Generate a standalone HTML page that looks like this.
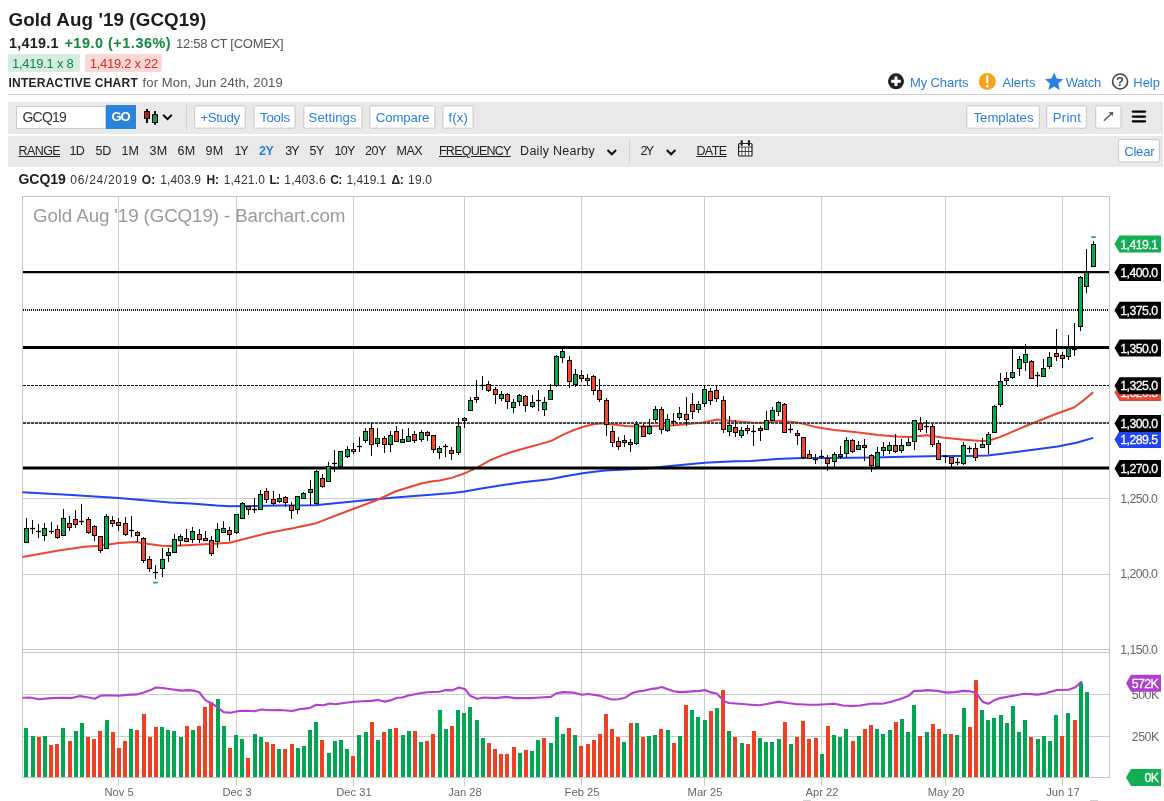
<!DOCTYPE html>
<html lang="en">
<head>
<meta charset="utf-8">
<title>Gold Aug '19 (GCQ19) Interactive Chart</title>
<style>
html,body{margin:0;padding:0;background:#fff;}
body{width:1164px;height:801px;position:relative;overflow:hidden;will-change:transform;font-family:"Liberation Sans",sans-serif;}
.t{position:absolute;white-space:nowrap;line-height:1;}
.box{position:absolute;box-sizing:border-box;}
svg text{font-family:"Liberation Sans",sans-serif;}
.ico{position:absolute;left:0;top:0;}
</style>
</head>
<body>
<div class="box" style="left:8px;top:94px;width:1156px;height:1px;background:#cdcdcd"></div>
<div class="box" style="left:8px;top:54px;width:72px;height:17.5px;background:#d6ebe1;border-radius:2px"></div>
<div class="box" style="left:85px;top:54px;width:77px;height:17.5px;background:#fbd8d8;border-radius:2px"></div>
<div class="box" style="left:8px;top:102px;width:1155px;height:31.7px;background:#e9e9e9"></div>
<div class="box" style="left:8px;top:136.3px;width:1155px;height:30.5px;background:#e9e9e9"></div>
<div class="box" style="left:16px;top:105.5px;width:90px;height:23.3px;background:#fff;border:1px solid #ccc"></div>
<div class="box" style="left:105.9px;top:105.1px;width:30.1px;height:23.8px;background:#2a84de"></div>
<div class="box" style="left:186px;top:105px;width:1px;height:24.5px;background:#d2d2d2"></div>
<div class="box" style="left:629px;top:138.5px;width:1px;height:25px;background:#d4d4d4"></div>
<svg class="ico" width="1164" height="190" viewBox="0 0 1164 190">
<rect x="194.7" y="105.9" width="50.5" height="22.3" rx="1.5" fill="#fff" stroke="#c6c6c6" stroke-width="1"/>
<rect x="254.0" y="105.9" width="41.1" height="22.3" rx="1.5" fill="#fff" stroke="#c6c6c6" stroke-width="1"/>
<rect x="303.8" y="105.9" width="58.2" height="22.3" rx="1.5" fill="#fff" stroke="#c6c6c6" stroke-width="1"/>
<rect x="369.9" y="105.9" width="65.0" height="22.3" rx="1.5" fill="#fff" stroke="#c6c6c6" stroke-width="1"/>
<rect x="442.9" y="105.9" width="30.2" height="22.3" rx="1.5" fill="#fff" stroke="#c6c6c6" stroke-width="1"/>
<rect x="966.8" y="105.9" width="72.5" height="22.3" rx="1.5" fill="#fff" stroke="#c6c6c6" stroke-width="1"/>
<rect x="1046.7" y="105.9" width="39.6" height="22.3" rx="1.5" fill="#fff" stroke="#c6c6c6" stroke-width="1"/>
<rect x="1095.7" y="105.9" width="25.3" height="22.3" rx="1.5" fill="#fff" stroke="#c6c6c6" stroke-width="1"/>
<rect x="1118.6" y="139.7" width="40.8" height="22.2" rx="1.5" fill="#fff" stroke="#c6c6c6" stroke-width="1"/>
</svg>
<span id="t_title" class="t" style="left:8.5px;top:11.00px;font-size:18.8px;font-weight:bold;color:#1c1c1c;letter-spacing:0.098px;">Gold Aug '19 (GCQ19)</span>
<span id="t_last" class="t" style="left:9px;top:36.00px;font-size:14.4px;font-weight:bold;color:#222;letter-spacing:0.242px;">1,419.1</span>
<span id="t_chg" class="t" style="left:64.4px;top:36.00px;font-size:14.4px;font-weight:bold;color:#0d8a3d;letter-spacing:0.540px;">+19.0 (+1.36%)</span>
<span id="t_time" class="t" style="left:176px;top:37.00px;font-size:13px;font-weight:normal;color:#555;letter-spacing:-0.275px;">12:58 CT [COMEX]</span>
<span id="t_bid" class="t" style="left:11.9px;top:57.00px;font-size:13px;font-weight:normal;color:#0d8a3d;letter-spacing:-0.241px;">1,419.1 x 8</span>
<span id="t_ask" class="t" style="left:89.8px;top:57.00px;font-size:13px;font-weight:normal;color:#d9281c;letter-spacing:-0.292px;">1,419.2 x 22</span>
<span id="t_ic" class="t" style="left:8.4px;top:77.00px;font-size:12px;font-weight:bold;color:#222;letter-spacing:0.252px;">INTERACTIVE CHART</span>
<span id="t_for" class="t" style="left:142.6px;top:76.00px;font-size:13px;font-weight:normal;color:#555;letter-spacing:0.124px;">for Mon, Jun 24th, 2019</span>
<span id="t_myc" class="t" style="left:909.9px;top:76.00px;font-size:13px;font-weight:normal;color:#2a7de1;letter-spacing:-0.087px;">My Charts</span>
<span id="t_alerts" class="t" style="left:1002.4px;top:76.00px;font-size:13px;font-weight:normal;color:#2a7de1;letter-spacing:-0.042px;">Alerts</span>
<span id="t_watch" class="t" style="left:1065.8px;top:76.00px;font-size:13px;font-weight:normal;color:#2a7de1;letter-spacing:-0.237px;">Watch</span>
<span id="t_help" class="t" style="left:1133.3px;top:76.00px;font-size:13px;font-weight:normal;color:#2a7de1;letter-spacing:-0.043px;">Help</span>
<span id="t_sym" class="t" style="left:22.5px;top:110.00px;font-size:14px;font-weight:normal;color:#333;letter-spacing:-0.772px;">GCQ19</span>
<span id="t_go" class="t" style="left:111.5px;top:110.00px;font-size:13px;font-weight:bold;color:#fff;letter-spacing:-1.156px;">GO</span>
<span id="t_study" class="t" style="left:200.4px;top:111.00px;font-size:13.2px;font-weight:normal;color:#2a7de1;letter-spacing:-0.333px;">+Study</span>
<span id="t_tools" class="t" style="left:260px;top:111.00px;font-size:13.2px;font-weight:normal;color:#2a7de1;letter-spacing:-0.175px;">Tools</span>
<span id="t_settings" class="t" style="left:308.6px;top:111.00px;font-size:13.2px;font-weight:normal;color:#2a7de1;letter-spacing:0.033px;">Settings</span>
<span id="t_compare" class="t" style="left:375.8px;top:111.00px;font-size:13.2px;font-weight:normal;color:#2a7de1;letter-spacing:-0.115px;">Compare</span>
<span id="t_fx" class="t" style="left:448.5px;top:111.00px;font-size:13.2px;font-weight:normal;color:#2a7de1;letter-spacing:0.128px;">f(x)</span>
<span id="t_templates" class="t" style="left:973.5px;top:111.00px;font-size:13.2px;font-weight:normal;color:#2a7de1;letter-spacing:-0.013px;">Templates</span>
<span id="t_print" class="t" style="left:1052.7px;top:111.00px;font-size:13.2px;font-weight:normal;color:#2a7de1;letter-spacing:0.263px;">Print</span>
<span id="t_clear" class="t" style="left:1124.2px;top:145.00px;font-size:13.2px;font-weight:normal;color:#2a7de1;letter-spacing:-0.272px;">Clear</span>
<span id="t_range" class="t" style="left:18.6px;top:145.00px;font-size:12.5px;font-weight:normal;color:#222;letter-spacing:-0.615px;text-decoration:underline">RANGE</span>
<span id="t_1d" class="t" style="left:69.6px;top:145.00px;font-size:12.5px;font-weight:normal;color:#222;letter-spacing:-0.729px;">1D</span>
<span id="t_5d" class="t" style="left:95.6px;top:145.00px;font-size:12.5px;font-weight:normal;color:#222;letter-spacing:-0.395px;">5D</span>
<span id="t_1m" class="t" style="left:121.5px;top:145.00px;font-size:12.5px;font-weight:normal;color:#222;letter-spacing:0.089px;">1M</span>
<span id="t_3m" class="t" style="left:149.5px;top:145.00px;font-size:12.5px;font-weight:normal;color:#222;letter-spacing:0.421px;">3M</span>
<span id="t_6m" class="t" style="left:177.5px;top:145.00px;font-size:12.5px;font-weight:normal;color:#222;letter-spacing:0.421px;">6M</span>
<span id="t_9m" class="t" style="left:205.5px;top:145.00px;font-size:12.5px;font-weight:normal;color:#222;letter-spacing:0.421px;">9M</span>
<span id="t_1y" class="t" style="left:234.5px;top:145.00px;font-size:12.5px;font-weight:normal;color:#222;letter-spacing:-1.196px;">1Y</span>
<span id="t_2y" class="t" style="left:259px;top:145.00px;font-size:12.5px;font-weight:bold;color:#2a7de1;letter-spacing:-0.532px;">2Y</span>
<span id="t_3y" class="t" style="left:285.2px;top:145.00px;font-size:12.5px;font-weight:normal;color:#222;letter-spacing:-0.995px;">3Y</span>
<span id="t_5y" class="t" style="left:309.6px;top:145.00px;font-size:12.5px;font-weight:normal;color:#222;letter-spacing:-0.595px;">5Y</span>
<span id="t_10y" class="t" style="left:334.6px;top:145.00px;font-size:12.5px;font-weight:normal;color:#222;letter-spacing:-0.739px;">10Y</span>
<span id="t_20y" class="t" style="left:365px;top:145.00px;font-size:12.5px;font-weight:normal;color:#222;letter-spacing:-0.501px;">20Y</span>
<span id="t_max" class="t" style="left:396.5px;top:145.00px;font-size:12.5px;font-weight:normal;color:#222;letter-spacing:-0.480px;">MAX</span>
<span id="t_freq" class="t" style="left:439px;top:145.00px;font-size:12.5px;font-weight:normal;color:#222;letter-spacing:-0.763px;text-decoration:underline">FREQUENCY</span>
<span id="t_daily" class="t" style="left:520.1px;top:145.00px;font-size:12.5px;font-weight:normal;color:#222;letter-spacing:0.273px;">Daily Nearby</span>
<span id="t_2ysel" class="t" style="left:640.5px;top:145.00px;font-size:12.5px;font-weight:normal;color:#222;letter-spacing:-1.595px;">2Y</span>
<span id="t_date" class="t" style="left:696.4px;top:145.00px;font-size:12.5px;font-weight:normal;color:#222;letter-spacing:-0.576px;text-decoration:underline">DATE</span>
<span id="t_o1" class="t" style="left:18.5px;top:172.00px;font-size:14px;font-weight:bold;color:#1c1c1c;letter-spacing:-0.038px;">GCQ19</span>
<span id="t_o2" class="t" style="left:70.3px;top:174.00px;font-size:12px;font-weight:normal;color:#333;letter-spacing:0.719px;">06/24/2019</span>
<span id="t_o3" class="t" style="left:141.8px;top:174.00px;font-size:12px;font-weight:bold;color:#222;letter-spacing:0.105px;">O:</span>
<span id="t_o4" class="t" style="left:160.3px;top:174.00px;font-size:12px;font-weight:normal;color:#333;letter-spacing:0.100px;">1,403.9</span>
<span id="t_o5" class="t" style="left:206.4px;top:174.00px;font-size:12px;font-weight:bold;color:#222;letter-spacing:-0.175px;">H:</span>
<span id="t_o6" class="t" style="left:223.7px;top:174.00px;font-size:12px;font-weight:normal;color:#333;letter-spacing:0.194px;">1,421.0</span>
<span id="t_o7" class="t" style="left:269.5px;top:174.00px;font-size:12px;font-weight:bold;color:#222;letter-spacing:-0.827px;">L:</span>
<span id="t_o8" class="t" style="left:284.3px;top:174.00px;font-size:12px;font-weight:normal;color:#333;letter-spacing:0.239px;">1,403.6</span>
<span id="t_o9" class="t" style="left:330.3px;top:174.00px;font-size:12px;font-weight:bold;color:#222;letter-spacing:-0.716px;">C:</span>
<span id="t_o10" class="t" style="left:346.5px;top:174.00px;font-size:12px;font-weight:normal;color:#333;letter-spacing:-0.053px;">1,419.1</span>
<span id="t_o11" class="t" style="left:391.6px;top:174.00px;font-size:12px;font-weight:bold;color:#222;letter-spacing:-0.356px;">Δ:</span>
<span id="t_o12" class="t" style="left:408.1px;top:174.00px;font-size:12px;font-weight:normal;color:#333;letter-spacing:0.152px;">19.0</span>
<svg class="ico" width="1164" height="190" viewBox="0 0 1164 190">
<circle cx="896" cy="81.3" r="8" fill="#222"/>
<path d="M891.2 81.3h9.6M896 76.5v9.6" stroke="#fff" stroke-width="3" fill="none"/>
<circle cx="987.3" cy="81.5" r="8.5" fill="#f9a21b"/>
<path d="M987.3 76.3v6.2" stroke="#fff" stroke-width="2" stroke-linecap="round" fill="none"/>
<circle cx="987.3" cy="86.3" r="1.3" fill="#fff"/>
<polygon points="1054.1,72.6 1056.7,78.6 1063.2,79.2 1058.3,83.5 1059.7,89.9 1054.1,86.6 1048.5,89.9 1049.9,83.5 1045,79.2 1051.5,78.6" fill="#2a7de1"/>
<circle cx="1120.1" cy="81.5" r="7.5" fill="#fff" stroke="#444" stroke-width="1.6"/>
<text x="1120.1" y="86.2" font-size="13" font-weight="bold" fill="#444" text-anchor="middle">?</text>
<!-- candlestick icon -->
<path d="M147 109v14M155 111v13.7" stroke="#000" stroke-width="1.9" fill="none"/>
<rect x="144.5" y="111.6" width="5" height="6.8" fill="#ad231c" stroke="#000" stroke-width="1"/>
<rect x="152.5" y="114.7" width="5" height="7.8" fill="#159549" stroke="#000" stroke-width="1"/>
<path d="M163.2 114.9l4.3 4.2l4.3-4.2" stroke="#000" stroke-width="2" fill="none"/>
<path d="M607.5 150l4.3 4.3l4.3-4.3" stroke="#111" stroke-width="2" fill="none"/>
<path d="M666.8 150l4.3 4.3l4.3-4.3" stroke="#111" stroke-width="2" fill="none"/>
<!-- calendar -->
<rect x="738.6" y="143.5" width="13.4" height="12.5" rx="1" fill="#fff" stroke="#222" stroke-width="1.2"/>
<path d="M742 147v9M745.3 147v9M748.6 147v9M738.6 147h13.4M738.6 151.5h13.4" stroke="#222" stroke-width="0.8" fill="none"/>
<path d="M741.7 141v4M748.9 141v4" stroke="#222" stroke-width="2.2" stroke-linecap="round" fill="none"/>
<!-- arrow -->
<path d="M1103.9 120.8L1111.6 113.6" stroke="#555" stroke-width="1.4" fill="none"/><polygon points="1113.2,112 1108.6,112.3 1112.9,116" fill="#555"/>
<!-- hamburger -->
<path d="M1132.8 111.6h12.3M1132.8 116.6h12.3M1132.8 121.3h12.3" stroke="#000" stroke-width="2.3" stroke-linecap="round" fill="none"/>

</svg>
<svg class="chart" width="1164" height="611" viewBox="0 190 1164 611" style="position:absolute;left:0;top:190px">
<g stroke="#cccccc" stroke-width="1" fill="none" shape-rendering="crispEdges">
<line x1="118.5" y1="196" x2="118.5" y2="786"/>
<line x1="236.5" y1="196" x2="236.5" y2="786"/>
<line x1="353.5" y1="196" x2="353.5" y2="786"/>
<line x1="464.5" y1="196" x2="464.5" y2="786"/>
<line x1="581.5" y1="196" x2="581.5" y2="786"/>
<line x1="704.5" y1="196" x2="704.5" y2="786"/>
<line x1="821.5" y1="196" x2="821.5" y2="786"/>
<line x1="945.5" y1="196" x2="945.5" y2="786"/>
<line x1="1062.5" y1="196" x2="1062.5" y2="786"/>
<line x1="22" y1="272.5" x2="1110" y2="272.5"/>
<line x1="22" y1="347.5" x2="1110" y2="347.5"/>
<line x1="22" y1="423.5" x2="1110" y2="423.5"/>
<line x1="22" y1="498.5" x2="1110" y2="498.5"/>
<line x1="22" y1="574.5" x2="1110" y2="574.5"/>
<line x1="22" y1="694.5" x2="1110" y2="694.5"/>
<line x1="22" y1="736.5" x2="1110" y2="736.5"/>
</g>
<g stroke="#c4c4c4" stroke-width="1" fill="none" shape-rendering="crispEdges">
<rect x="22.5" y="196.5" width="1087" height="581"/>
<line x1="22" y1="649.5" x2="1110" y2="649.5"/>
<line x1="22" y1="652.5" x2="1110" y2="652.5"/>
</g>
<text id="wm" x="33" y="222" font-size="18.8" fill="#9a9a9a" textLength="312.5" lengthAdjust="spacing">Gold Aug '19 (GCQ19) - Barchart.com</text>
<g shape-rendering="crispEdges">
<rect x="24" y="728" width="4" height="49" fill="#00a651"/>
<rect x="31" y="736" width="4" height="41" fill="#00a651"/>
<rect x="37" y="737" width="4" height="40" fill="#ee4023"/>
<rect x="43" y="736" width="4" height="41" fill="#00a651"/>
<rect x="49" y="745" width="4" height="32" fill="#ee4023"/>
<rect x="55" y="744" width="4" height="33" fill="#ee4023"/>
<rect x="61" y="728" width="4" height="49" fill="#00a651"/>
<rect x="68" y="741" width="4" height="36" fill="#ee4023"/>
<rect x="74" y="731" width="4" height="46" fill="#00a651"/>
<rect x="80" y="723" width="4" height="54" fill="#00a651"/>
<rect x="86" y="737" width="4" height="40" fill="#ee4023"/>
<rect x="92" y="739" width="4" height="38" fill="#ee4023"/>
<rect x="98" y="731" width="4" height="46" fill="#ee4023"/>
<rect x="105" y="720" width="4" height="57" fill="#00a651"/>
<rect x="111" y="732" width="4" height="45" fill="#ee4023"/>
<rect x="117" y="748" width="4" height="29" fill="#ee4023"/>
<rect x="123" y="741" width="4" height="36" fill="#ee4023"/>
<rect x="129" y="729" width="4" height="48" fill="#00a651"/>
<rect x="135" y="730" width="4" height="47" fill="#ee4023"/>
<rect x="142" y="714" width="4" height="63" fill="#ee4023"/>
<rect x="148" y="737" width="4" height="40" fill="#ee4023"/>
<rect x="154" y="727" width="4" height="50" fill="#ee4023"/>
<rect x="160" y="727" width="4" height="50" fill="#00a651"/>
<rect x="166" y="730" width="4" height="47" fill="#00a651"/>
<rect x="172" y="731" width="4" height="46" fill="#00a651"/>
<rect x="179" y="737" width="4" height="40" fill="#00a651"/>
<rect x="185" y="726" width="4" height="51" fill="#ee4023"/>
<rect x="191" y="730" width="4" height="47" fill="#00a651"/>
<rect x="197" y="726" width="4" height="51" fill="#ee4023"/>
<rect x="203" y="707" width="4" height="70" fill="#ee4023"/>
<rect x="209" y="702" width="4" height="75" fill="#ee4023"/>
<rect x="216" y="699" width="4" height="78" fill="#00a651"/>
<rect x="222" y="726" width="4" height="51" fill="#00a651"/>
<rect x="228" y="748" width="4" height="29" fill="#ee4023"/>
<rect x="234" y="735" width="4" height="42" fill="#00a651"/>
<rect x="240" y="739" width="4" height="38" fill="#00a651"/>
<rect x="246" y="758" width="4" height="19" fill="#ee4023"/>
<rect x="253" y="734" width="4" height="43" fill="#00a651"/>
<rect x="259" y="737" width="4" height="40" fill="#00a651"/>
<rect x="265" y="742" width="4" height="35" fill="#ee4023"/>
<rect x="271" y="744" width="4" height="33" fill="#ee4023"/>
<rect x="277" y="749" width="4" height="28" fill="#00a651"/>
<rect x="283" y="749" width="4" height="28" fill="#ee4023"/>
<rect x="290" y="744" width="4" height="33" fill="#ee4023"/>
<rect x="296" y="748" width="4" height="29" fill="#00a651"/>
<rect x="302" y="746" width="4" height="31" fill="#00a651"/>
<rect x="308" y="730" width="4" height="47" fill="#00a651"/>
<rect x="314" y="722" width="4" height="55" fill="#00a651"/>
<rect x="320" y="740" width="4" height="37" fill="#ee4023"/>
<rect x="327" y="753" width="4" height="24" fill="#00a651"/>
<rect x="333" y="741" width="4" height="36" fill="#00a651"/>
<rect x="339" y="740" width="4" height="37" fill="#00a651"/>
<rect x="345" y="749" width="4" height="28" fill="#00a651"/>
<rect x="351" y="756" width="4" height="21" fill="#ee4023"/>
<rect x="357" y="735" width="4" height="42" fill="#00a651"/>
<rect x="364" y="732" width="4" height="45" fill="#00a651"/>
<rect x="370" y="722" width="4" height="55" fill="#ee4023"/>
<rect x="376" y="740" width="4" height="37" fill="#00a651"/>
<rect x="382" y="732" width="4" height="45" fill="#ee4023"/>
<rect x="388" y="729" width="4" height="48" fill="#00a651"/>
<rect x="394" y="728" width="4" height="49" fill="#ee4023"/>
<rect x="401" y="735" width="4" height="42" fill="#00a651"/>
<rect x="407" y="731" width="4" height="46" fill="#00a651"/>
<rect x="413" y="731" width="4" height="46" fill="#ee4023"/>
<rect x="419" y="742" width="4" height="35" fill="#00a651"/>
<rect x="425" y="741" width="4" height="36" fill="#ee4023"/>
<rect x="431" y="734" width="4" height="43" fill="#ee4023"/>
<rect x="438" y="710" width="4" height="67" fill="#00a651"/>
<rect x="444" y="729" width="4" height="48" fill="#00a651"/>
<rect x="450" y="726" width="4" height="51" fill="#ee4023"/>
<rect x="456" y="710" width="4" height="67" fill="#00a651"/>
<rect x="462" y="713" width="4" height="64" fill="#00a651"/>
<rect x="468" y="707" width="4" height="70" fill="#00a651"/>
<rect x="475" y="720" width="4" height="57" fill="#00a651"/>
<rect x="481" y="738" width="4" height="39" fill="#00a651"/>
<rect x="487" y="743" width="4" height="34" fill="#ee4023"/>
<rect x="493" y="749" width="4" height="28" fill="#ee4023"/>
<rect x="499" y="754" width="4" height="23" fill="#ee4023"/>
<rect x="505" y="754" width="4" height="23" fill="#ee4023"/>
<rect x="512" y="747" width="4" height="30" fill="#ee4023"/>
<rect x="518" y="753" width="4" height="24" fill="#00a651"/>
<rect x="524" y="750" width="4" height="27" fill="#ee4023"/>
<rect x="530" y="751" width="4" height="26" fill="#00a651"/>
<rect x="536" y="740" width="4" height="37" fill="#00a651"/>
<rect x="542" y="738" width="4" height="39" fill="#ee4023"/>
<rect x="549" y="743" width="4" height="34" fill="#00a651"/>
<rect x="555" y="717" width="4" height="60" fill="#00a651"/>
<rect x="561" y="734" width="4" height="43" fill="#00a651"/>
<rect x="567" y="728" width="4" height="49" fill="#ee4023"/>
<rect x="573" y="735" width="4" height="42" fill="#00a651"/>
<rect x="579" y="746" width="4" height="31" fill="#ee4023"/>
<rect x="586" y="744" width="4" height="33" fill="#ee4023"/>
<rect x="592" y="740" width="4" height="37" fill="#ee4023"/>
<rect x="598" y="734" width="4" height="43" fill="#ee4023"/>
<rect x="604" y="714" width="4" height="63" fill="#ee4023"/>
<rect x="610" y="729" width="4" height="48" fill="#ee4023"/>
<rect x="616" y="737" width="4" height="40" fill="#ee4023"/>
<rect x="622" y="742" width="4" height="35" fill="#00a651"/>
<rect x="629" y="723" width="4" height="54" fill="#ee4023"/>
<rect x="635" y="723" width="4" height="54" fill="#00a651"/>
<rect x="641" y="737" width="4" height="40" fill="#ee4023"/>
<rect x="647" y="736" width="4" height="41" fill="#00a651"/>
<rect x="653" y="735" width="4" height="42" fill="#00a651"/>
<rect x="659" y="729" width="4" height="48" fill="#ee4023"/>
<rect x="666" y="730" width="4" height="47" fill="#00a651"/>
<rect x="672" y="743" width="4" height="34" fill="#ee4023"/>
<rect x="678" y="736" width="4" height="41" fill="#00a651"/>
<rect x="684" y="705" width="4" height="72" fill="#ee4023"/>
<rect x="690" y="710" width="4" height="67" fill="#00a651"/>
<rect x="696" y="717" width="4" height="60" fill="#00a651"/>
<rect x="703" y="720" width="4" height="57" fill="#00a651"/>
<rect x="709" y="711" width="4" height="66" fill="#ee4023"/>
<rect x="715" y="708" width="4" height="69" fill="#00a651"/>
<rect x="721" y="690" width="4" height="87" fill="#ee4023"/>
<rect x="727" y="731" width="4" height="46" fill="#00a651"/>
<rect x="733" y="737" width="4" height="40" fill="#ee4023"/>
<rect x="740" y="743" width="4" height="34" fill="#00a651"/>
<rect x="746" y="744" width="4" height="33" fill="#ee4023"/>
<rect x="752" y="731" width="4" height="46" fill="#ee4023"/>
<rect x="758" y="738" width="4" height="39" fill="#00a651"/>
<rect x="764" y="742" width="4" height="35" fill="#00a651"/>
<rect x="770" y="742" width="4" height="35" fill="#00a651"/>
<rect x="777" y="739" width="4" height="38" fill="#00a651"/>
<rect x="783" y="722" width="4" height="55" fill="#ee4023"/>
<rect x="789" y="744" width="4" height="33" fill="#00a651"/>
<rect x="795" y="737" width="4" height="40" fill="#ee4023"/>
<rect x="801" y="721" width="4" height="56" fill="#ee4023"/>
<rect x="807" y="739" width="4" height="38" fill="#ee4023"/>
<rect x="814" y="738" width="4" height="39" fill="#ee4023"/>
<rect x="820" y="754" width="4" height="23" fill="#00a651"/>
<rect x="826" y="726" width="4" height="51" fill="#ee4023"/>
<rect x="832" y="735" width="4" height="42" fill="#00a651"/>
<rect x="838" y="737" width="4" height="40" fill="#00a651"/>
<rect x="844" y="729" width="4" height="48" fill="#00a651"/>
<rect x="851" y="741" width="4" height="36" fill="#ee4023"/>
<rect x="857" y="736" width="4" height="41" fill="#00a651"/>
<rect x="863" y="729" width="4" height="48" fill="#ee4023"/>
<rect x="869" y="725" width="4" height="52" fill="#ee4023"/>
<rect x="875" y="729" width="4" height="48" fill="#00a651"/>
<rect x="881" y="734" width="4" height="43" fill="#00a651"/>
<rect x="888" y="730" width="4" height="47" fill="#00a651"/>
<rect x="894" y="722" width="4" height="55" fill="#ee4023"/>
<rect x="900" y="719" width="4" height="58" fill="#00a651"/>
<rect x="906" y="732" width="4" height="45" fill="#00a651"/>
<rect x="912" y="705" width="4" height="72" fill="#00a651"/>
<rect x="918" y="736" width="4" height="41" fill="#ee4023"/>
<rect x="925" y="732" width="4" height="45" fill="#00a651"/>
<rect x="931" y="724" width="4" height="53" fill="#ee4023"/>
<rect x="937" y="729" width="4" height="48" fill="#ee4023"/>
<rect x="943" y="734" width="4" height="43" fill="#00a651"/>
<rect x="949" y="734" width="4" height="43" fill="#ee4023"/>
<rect x="955" y="735" width="4" height="42" fill="#00a651"/>
<rect x="962" y="708" width="4" height="69" fill="#00a651"/>
<rect x="968" y="727" width="4" height="50" fill="#ee4023"/>
<rect x="974" y="680" width="4" height="97" fill="#ee4023"/>
<rect x="980" y="710" width="4" height="67" fill="#00a651"/>
<rect x="986" y="720" width="4" height="57" fill="#00a651"/>
<rect x="992" y="718" width="4" height="59" fill="#00a651"/>
<rect x="999" y="715" width="4" height="62" fill="#00a651"/>
<rect x="1005" y="723" width="4" height="54" fill="#00a651"/>
<rect x="1011" y="706" width="4" height="71" fill="#00a651"/>
<rect x="1017" y="732" width="4" height="45" fill="#00a651"/>
<rect x="1023" y="720" width="4" height="57" fill="#00a651"/>
<rect x="1029" y="737" width="4" height="40" fill="#ee4023"/>
<rect x="1036" y="739" width="4" height="38" fill="#00a651"/>
<rect x="1042" y="736" width="4" height="41" fill="#00a651"/>
<rect x="1048" y="741" width="4" height="36" fill="#00a651"/>
<rect x="1054" y="715" width="4" height="62" fill="#00a651"/>
<rect x="1060" y="736" width="4" height="41" fill="#ee4023"/>
<rect x="1066" y="713" width="4" height="64" fill="#00a651"/>
<rect x="1073" y="720" width="4" height="57" fill="#ee4023"/>
<rect x="1079" y="683" width="4" height="94" fill="#00a651"/>
<rect x="1085" y="692" width="4" height="85" fill="#00a651"/>
</g>
<polyline points="23.4,697.8 30.3,697.5 38.9,699.2 50.9,698.1 63.0,697.8 71.5,698.1 80.1,696.1 88.7,697.5 94.7,698.7 100.8,695.6 109.3,695.2 119.0,695.7 126.5,694.9 136.8,694.4 143.7,692.6 150.6,690.1 155.7,687.5 162.6,688.0 171.2,689.2 181.5,690.6 188.4,690.1 195.3,690.9 199.6,692.6 202.1,696.1 205.6,700.4 212.4,703.8 215.0,705.5 223.6,712.1 230.5,712.7 239.1,711.0 245.9,710.7 254.5,711.2 261.4,709.5 270.0,710.3 280.3,710.0 292.3,711.0 299.2,709.3 309.5,708.1 316.4,704.7 323.2,705.2 330.1,703.5 335.3,704.3 343.9,703.0 354.2,701.8 362.8,701.2 371.4,700.9 378.2,699.9 384.2,701.6 390.3,700.4 397.1,697.8 402.3,697.5 409.2,695.2 410.0,695.2 418.6,693.5 427.2,692.3 439.2,691.8 446.1,690.1 452.1,690.4 459.0,687.5 465.0,689.2 470.1,695.7 477.0,698.7 483.9,697.5 495.9,698.1 506.2,696.9 514.8,698.1 530.3,698.1 540.6,697.5 550.9,696.9 556.0,693.5 562.9,692.1 573.2,692.6 581.8,694.7 588.7,694.0 599.0,695.6 605.0,697.5 611.9,699.5 618.7,699.2 625.6,697.5 630.8,693.8 635.9,691.8 644.5,690.6 651.4,688.9 656.5,688.4 661.7,687.0 668.6,689.6 673.7,691.3 680.6,692.1 692.6,691.4 699.5,690.9 704.7,690.1 709.8,692.1 716.7,693.5 720.1,696.9 723.6,700.9 728.7,703.0 739.0,703.8 751.0,704.7 759.6,705.2 768.2,703.8 778.5,701.6 787.1,703.0 797.4,704.2 800.0,704.3 808.6,704.7 817.2,704.7 825.8,704.2 834.4,703.8 843.0,705.5 851.5,706.0 860.1,705.5 872.2,703.5 882.5,703.8 891.1,701.8 899.7,699.2 908.2,696.1 914.3,690.9 920.3,690.9 927.1,690.1 937.5,690.9 946.0,692.6 954.6,692.1 963.2,690.9 970.1,691.3 976.1,693.0 982.1,701.2 984.0,702.2 988.1,703.8 993.7,700.6 1000.2,698.1 1013.2,695.7 1024.6,693.8 1037.6,694.6 1045.7,693.3 1057.1,690.0 1068.4,689.7 1074.9,687.6 1081.4,681.9" fill="none" stroke="#b23fd0" stroke-width="2.1" stroke-linejoin="round" stroke-linecap="round"/>
<polyline points="22.5,492.3 71.5,494.9 118.6,498.0 170.0,502.5 190.8,503.4 216.5,505.6 229.4,506.2 255.2,506.0 281.0,505.6 315.0,505.2 368.0,500.0 395.0,497.6 433.9,494.6 452.4,493.1 464.7,491.4 481.2,488.4 501.9,485.3 522.5,482.2 543.1,480.1 551.3,479.1 563.7,476.4 584.3,472.9 604.9,470.4 625.6,469.6 646.2,468.6 664.9,466.6 704.8,462.8 735.0,461.3 750.8,461.0 776.5,459.1 802.3,458.1 828.0,458.1 853.9,457.8 875.0,457.4 903.7,456.8 942.3,455.9 968.0,455.9 987.4,455.5 1000.3,453.9 1020.0,451.4 1057.6,446.5 1076.4,442.8 1093.2,437.9" fill="none" stroke="#1f44f5" stroke-width="2" stroke-linejoin="round"/>
<polyline points="22.5,556.9 58.7,550.6 84.4,546.7 99.9,545.7 118.6,543.1 136.0,541.9 148.9,543.9 161.8,545.8 170.0,545.9 190.8,544.9 210.0,543.9 229.4,542.7 242.3,539.5 268.0,533.0 293.9,528.1 315.0,523.6 345.0,512.0 377.2,500.0 395.2,491.5 421.0,483.5 433.9,480.9 440.0,480.5 452.4,477.6 464.7,473.3 477.1,467.7 489.5,460.5 501.9,455.4 514.2,451.2 526.6,447.7 539.0,444.4 551.3,440.9 563.7,434.3 574.0,430.0 584.3,426.5 594.6,424.0 602.9,423.2 615.3,424.8 625.6,426.1 635.9,426.6 649.4,426.3 675.2,425.2 701.0,422.8 717.7,419.6 726.8,420.6 750.8,422.4 763.7,422.8 780.4,420.8 797.2,422.4 815.2,426.9 834.5,430.1 853.9,432.0 866.8,433.5 877.9,434.9 897.2,436.6 910.1,436.9 926.9,435.3 942.3,437.5 961.6,439.4 981.0,441.0 988.7,440.7 1000.3,436.9 1015.0,430.7 1025.8,426.0 1053.9,414.7 1074.5,407.2 1084.0,400.0 1093.2,392.2" fill="none" stroke="#ee4430" stroke-width="2" stroke-linejoin="round"/>
<g fill="none">
<line x1="23" y1="272.2" x2="1109" y2="272.2" stroke="#000" stroke-width="2.3"/>
<line x1="23" y1="310" x2="1109" y2="310" stroke="#111" stroke-width="2" stroke-dasharray="1 1"/>
<line x1="23" y1="347.5" x2="1109" y2="347.5" stroke="#000" stroke-width="3"/>
<line x1="23" y1="385.5" x2="1109" y2="385.5" stroke="#111" stroke-width="1" stroke-dasharray="3 1"/>
<line x1="23" y1="423" x2="1109" y2="423" stroke="#444" stroke-width="2" stroke-dasharray="3 1"/>
<line x1="23" y1="468" x2="1109" y2="468" stroke="#000" stroke-width="3"/>
</g>
<g stroke="#000" stroke-width="1">
<line x1="26.5" y1="518" x2="26.5" y2="543"/>
<rect x="24.5" y="528.5" width="4" height="14" fill="#00b050"/>
<line x1="32.5" y1="520" x2="32.5" y2="534"/>
<line x1="30" y1="528.5" x2="35" y2="528.5" stroke-width="1.3"/>
<line x1="38.5" y1="524" x2="38.5" y2="538"/>
<line x1="36" y1="531.5" x2="41" y2="531.5" stroke-width="1.3"/>
<line x1="44.5" y1="523" x2="44.5" y2="541"/>
<rect x="42.5" y="528.5" width="4" height="7" fill="#00b050"/>
<line x1="51.5" y1="522" x2="51.5" y2="534"/>
<line x1="49" y1="531.5" x2="54" y2="531.5" stroke-width="1.3"/>
<line x1="57.5" y1="525" x2="57.5" y2="539"/>
<rect x="55.5" y="529.5" width="4" height="8" fill="#f5472a"/>
<line x1="63.5" y1="509" x2="63.5" y2="536"/>
<rect x="61.5" y="518.5" width="4" height="17" fill="#00b050"/>
<line x1="69.5" y1="516" x2="69.5" y2="531"/>
<rect x="67.5" y="523.5" width="4" height="4" fill="#f5472a"/>
<line x1="75.5" y1="510" x2="75.5" y2="528"/>
<rect x="73.5" y="519.5" width="4" height="5" fill="#f5472a"/>
<line x1="81.5" y1="504" x2="81.5" y2="525"/>
<line x1="79" y1="521.5" x2="84" y2="521.5" stroke-width="1.3"/>
<line x1="88.5" y1="517" x2="88.5" y2="534"/>
<rect x="86.5" y="519.5" width="4" height="13" fill="#f5472a"/>
<line x1="94.5" y1="525" x2="94.5" y2="541"/>
<rect x="92.5" y="526.5" width="4" height="9" fill="#f5472a"/>
<line x1="100.5" y1="536" x2="100.5" y2="553"/>
<rect x="98.5" y="536.5" width="4" height="14" fill="#f5472a"/>
<line x1="106.5" y1="514" x2="106.5" y2="549"/>
<rect x="104.5" y="516.5" width="4" height="32" fill="#00b050"/>
<line x1="112.5" y1="516" x2="112.5" y2="527"/>
<rect x="110.5" y="520.5" width="4" height="3" fill="#f5472a"/>
<line x1="118.5" y1="518" x2="118.5" y2="531"/>
<rect x="116.5" y="522.5" width="4" height="3" fill="#f5472a"/>
<line x1="125.5" y1="517" x2="125.5" y2="536"/>
<rect x="123.5" y="523.5" width="4" height="11" fill="#f5472a"/>
<line x1="131.5" y1="516" x2="131.5" y2="537"/>
<line x1="129" y1="530.5" x2="134" y2="530.5" stroke-width="1.3"/>
<line x1="137.5" y1="531" x2="137.5" y2="542"/>
<rect x="135.5" y="532.5" width="4" height="3" fill="#f5472a"/>
<line x1="143.5" y1="537" x2="143.5" y2="563"/>
<rect x="141.5" y="538.5" width="4" height="22" fill="#f5472a"/>
<line x1="149.5" y1="556" x2="149.5" y2="572"/>
<rect x="147.5" y="559.5" width="4" height="9" fill="#f5472a"/>
<line x1="155.5" y1="565" x2="155.5" y2="579"/>
<line x1="153" y1="572.5" x2="158" y2="572.5" stroke-width="1.3"/>
<line x1="162.5" y1="548" x2="162.5" y2="577"/>
<rect x="160.5" y="559.5" width="4" height="9" fill="#00b050"/>
<line x1="168.5" y1="548" x2="168.5" y2="562"/>
<rect x="166.5" y="552.5" width="4" height="3" fill="#00b050"/>
<line x1="174.5" y1="534" x2="174.5" y2="552"/>
<rect x="172.5" y="539.5" width="4" height="13" fill="#00b050"/>
<line x1="180.5" y1="534" x2="180.5" y2="546"/>
<rect x="178.5" y="536.5" width="4" height="4" fill="#00b050"/>
<line x1="186.5" y1="529" x2="186.5" y2="542"/>
<rect x="184.5" y="538.5" width="4" height="3" fill="#f5472a"/>
<line x1="192.5" y1="527" x2="192.5" y2="543"/>
<rect x="190.5" y="531.5" width="4" height="8" fill="#00b050"/>
<line x1="199.5" y1="529" x2="199.5" y2="543"/>
<rect x="197.5" y="534.5" width="4" height="5" fill="#f5472a"/>
<line x1="205.5" y1="531" x2="205.5" y2="540"/>
<rect x="203.5" y="538.5" width="4" height="2" fill="#f5472a"/>
<line x1="211.5" y1="536" x2="211.5" y2="556"/>
<rect x="209.5" y="540.5" width="4" height="13" fill="#f5472a"/>
<line x1="217.5" y1="523" x2="217.5" y2="548"/>
<rect x="215.5" y="529.5" width="4" height="12" fill="#00b050"/>
<line x1="223.5" y1="521" x2="223.5" y2="533"/>
<rect x="221.5" y="528.5" width="4" height="4" fill="#00b050"/>
<line x1="229.5" y1="527" x2="229.5" y2="541"/>
<rect x="227.5" y="530.5" width="4" height="4" fill="#f5472a"/>
<line x1="236.5" y1="514" x2="236.5" y2="534"/>
<rect x="234.5" y="514.5" width="4" height="18" fill="#00b050"/>
<line x1="242.5" y1="502" x2="242.5" y2="519"/>
<rect x="240.5" y="503.5" width="4" height="15" fill="#00b050"/>
<line x1="248.5" y1="506" x2="248.5" y2="515"/>
<rect x="246.5" y="506.5" width="4" height="3" fill="#f5472a"/>
<line x1="254.5" y1="498" x2="254.5" y2="513"/>
<line x1="252" y1="509.5" x2="257" y2="509.5" stroke-width="1.3"/>
<line x1="260.5" y1="490" x2="260.5" y2="509"/>
<rect x="258.5" y="494.5" width="4" height="15" fill="#00b050"/>
<line x1="266.5" y1="488" x2="266.5" y2="503"/>
<rect x="264.5" y="491.5" width="4" height="8" fill="#f5472a"/>
<line x1="273.5" y1="491" x2="273.5" y2="505"/>
<rect x="271.5" y="499.5" width="4" height="4" fill="#f5472a"/>
<line x1="279.5" y1="494" x2="279.5" y2="503"/>
<rect x="277.5" y="498.5" width="4" height="3" fill="#00b050"/>
<line x1="285.5" y1="496" x2="285.5" y2="507"/>
<rect x="283.5" y="497.5" width="4" height="5" fill="#f5472a"/>
<line x1="291.5" y1="502" x2="291.5" y2="519"/>
<rect x="289.5" y="505.5" width="4" height="5" fill="#f5472a"/>
<line x1="297.5" y1="496" x2="297.5" y2="514"/>
<rect x="295.5" y="496.5" width="4" height="13" fill="#00b050"/>
<line x1="303.5" y1="492" x2="303.5" y2="499"/>
<rect x="301.5" y="493.5" width="4" height="5" fill="#00b050"/>
<line x1="310.5" y1="480" x2="310.5" y2="505"/>
<rect x="308.5" y="489.5" width="4" height="3" fill="#00b050"/>
<line x1="316.5" y1="470" x2="316.5" y2="504"/>
<rect x="314.5" y="471.5" width="4" height="32" fill="#00b050"/>
<line x1="322.5" y1="474" x2="322.5" y2="488"/>
<rect x="320.5" y="478.5" width="4" height="8" fill="#f5472a"/>
<line x1="328.5" y1="462" x2="328.5" y2="482"/>
<rect x="326.5" y="466.5" width="4" height="15" fill="#00b050"/>
<line x1="334.5" y1="450" x2="334.5" y2="472"/>
<line x1="332" y1="463.5" x2="337" y2="463.5" stroke-width="1.3"/>
<line x1="340.5" y1="451" x2="340.5" y2="469"/>
<rect x="338.5" y="451.5" width="4" height="15" fill="#00b050"/>
<line x1="347.5" y1="446" x2="347.5" y2="458"/>
<rect x="345.5" y="449.5" width="4" height="7" fill="#00b050"/>
<line x1="353.5" y1="443" x2="353.5" y2="454"/>
<rect x="351.5" y="449.5" width="4" height="2" fill="#f5472a"/>
<line x1="359.5" y1="437" x2="359.5" y2="452"/>
<line x1="357" y1="446.5" x2="362" y2="446.5" stroke-width="1.3"/>
<line x1="365.5" y1="428" x2="365.5" y2="443"/>
<rect x="363.5" y="431.5" width="4" height="9" fill="#00b050"/>
<line x1="371.5" y1="423" x2="371.5" y2="456"/>
<rect x="369.5" y="428.5" width="4" height="16" fill="#f5472a"/>
<line x1="377.5" y1="428" x2="377.5" y2="447"/>
<rect x="375.5" y="438.5" width="4" height="5" fill="#00b050"/>
<line x1="384.5" y1="436" x2="384.5" y2="453"/>
<rect x="382.5" y="438.5" width="4" height="6" fill="#f5472a"/>
<line x1="390.5" y1="431" x2="390.5" y2="452"/>
<rect x="388.5" y="435.5" width="4" height="9" fill="#00b050"/>
<line x1="396.5" y1="426" x2="396.5" y2="442"/>
<rect x="394.5" y="431.5" width="4" height="10" fill="#f5472a"/>
<line x1="402.5" y1="429" x2="402.5" y2="442"/>
<rect x="400.5" y="439.5" width="4" height="3" fill="#00b050"/>
<line x1="408.5" y1="428" x2="408.5" y2="441"/>
<rect x="406.5" y="436.5" width="4" height="5" fill="#00b050"/>
<line x1="414.5" y1="431" x2="414.5" y2="443"/>
<rect x="412.5" y="434.5" width="4" height="6" fill="#f5472a"/>
<line x1="421.5" y1="430" x2="421.5" y2="442"/>
<rect x="419.5" y="432.5" width="4" height="7" fill="#00b050"/>
<line x1="427.5" y1="431" x2="427.5" y2="441"/>
<rect x="425.5" y="432.5" width="4" height="3" fill="#f5472a"/>
<line x1="433.5" y1="435" x2="433.5" y2="453"/>
<rect x="431.5" y="435.5" width="4" height="14" fill="#f5472a"/>
<line x1="439.5" y1="446" x2="439.5" y2="459"/>
<rect x="437.5" y="448.5" width="4" height="4" fill="#00b050"/>
<line x1="445.5" y1="444" x2="445.5" y2="457"/>
<line x1="443" y1="446.5" x2="448" y2="446.5" stroke-width="1.3"/>
<line x1="451.5" y1="447" x2="451.5" y2="460"/>
<rect x="449.5" y="450.5" width="4" height="3" fill="#f5472a"/>
<line x1="458.5" y1="418" x2="458.5" y2="455"/>
<rect x="456.5" y="426.5" width="4" height="26" fill="#00b050"/>
<line x1="464.5" y1="417" x2="464.5" y2="428"/>
<rect x="462.5" y="418.5" width="4" height="2" fill="#00b050"/>
<line x1="470.5" y1="397" x2="470.5" y2="410"/>
<rect x="468.5" y="400.5" width="4" height="10" fill="#00b050"/>
<line x1="476.5" y1="380" x2="476.5" y2="403"/>
<rect x="474.5" y="397.5" width="4" height="2" fill="#f5472a"/>
<line x1="482.5" y1="376" x2="482.5" y2="390"/>
<line x1="480" y1="385.5" x2="485" y2="385.5" stroke-width="1.3"/>
<line x1="488.5" y1="381" x2="488.5" y2="392"/>
<rect x="486.5" y="384.5" width="4" height="6" fill="#f5472a"/>
<line x1="495.5" y1="387" x2="495.5" y2="404"/>
<rect x="493.5" y="389.5" width="4" height="5" fill="#f5472a"/>
<line x1="501.5" y1="391" x2="501.5" y2="401"/>
<rect x="499.5" y="394.5" width="4" height="4" fill="#00b050"/>
<line x1="507.5" y1="393" x2="507.5" y2="409"/>
<rect x="505.5" y="394.5" width="4" height="7" fill="#f5472a"/>
<line x1="513.5" y1="399" x2="513.5" y2="413"/>
<rect x="511.5" y="402.5" width="4" height="5" fill="#00b050"/>
<line x1="519.5" y1="394" x2="519.5" y2="406"/>
<rect x="517.5" y="395.5" width="4" height="6" fill="#00b050"/>
<line x1="525.5" y1="395" x2="525.5" y2="412"/>
<rect x="523.5" y="396.5" width="4" height="9" fill="#f5472a"/>
<line x1="532.5" y1="395" x2="532.5" y2="408"/>
<rect x="530.5" y="402.5" width="4" height="4" fill="#00b050"/>
<line x1="538.5" y1="390" x2="538.5" y2="411"/>
<line x1="536" y1="400.5" x2="541" y2="400.5" stroke-width="1.3"/>
<line x1="544.5" y1="397" x2="544.5" y2="416"/>
<rect x="542.5" y="402.5" width="4" height="7" fill="#00b050"/>
<line x1="550.5" y1="384" x2="550.5" y2="400"/>
<rect x="548.5" y="390.5" width="4" height="9" fill="#00b050"/>
<line x1="556.5" y1="355" x2="556.5" y2="387"/>
<rect x="554.5" y="356.5" width="4" height="29" fill="#00b050"/>
<line x1="562.5" y1="349" x2="562.5" y2="363"/>
<rect x="560.5" y="351.5" width="4" height="6" fill="#00b050"/>
<line x1="569.5" y1="356" x2="569.5" y2="388"/>
<rect x="567.5" y="360.5" width="4" height="21" fill="#f5472a"/>
<line x1="575.5" y1="369" x2="575.5" y2="387"/>
<rect x="573.5" y="374.5" width="4" height="10" fill="#00b050"/>
<line x1="581.5" y1="370" x2="581.5" y2="382"/>
<rect x="579.5" y="375.5" width="4" height="3" fill="#f5472a"/>
<line x1="587.5" y1="374" x2="587.5" y2="385"/>
<rect x="585.5" y="378.5" width="4" height="2" fill="#f5472a"/>
<line x1="593.5" y1="375" x2="593.5" y2="395"/>
<rect x="591.5" y="376.5" width="4" height="14" fill="#f5472a"/>
<line x1="599.5" y1="379" x2="599.5" y2="402"/>
<rect x="597.5" y="390.5" width="4" height="9" fill="#f5472a"/>
<line x1="606.5" y1="398" x2="606.5" y2="436"/>
<rect x="604.5" y="400.5" width="4" height="24" fill="#f5472a"/>
<line x1="612.5" y1="426" x2="612.5" y2="447"/>
<rect x="610.5" y="431.5" width="4" height="11" fill="#f5472a"/>
<line x1="618.5" y1="437" x2="618.5" y2="450"/>
<rect x="616.5" y="441.5" width="4" height="5" fill="#f5472a"/>
<line x1="624.5" y1="435" x2="624.5" y2="447"/>
<rect x="622.5" y="440.5" width="4" height="2" fill="#f5472a"/>
<line x1="630.5" y1="439" x2="630.5" y2="452"/>
<rect x="628.5" y="442.5" width="4" height="2" fill="#f5472a"/>
<line x1="636.5" y1="421" x2="636.5" y2="445"/>
<rect x="634.5" y="424.5" width="4" height="19" fill="#00b050"/>
<line x1="643.5" y1="424" x2="643.5" y2="436"/>
<rect x="641.5" y="426.5" width="4" height="10" fill="#f5472a"/>
<line x1="649.5" y1="419" x2="649.5" y2="435"/>
<rect x="647.5" y="426.5" width="4" height="7" fill="#00b050"/>
<line x1="655.5" y1="406" x2="655.5" y2="422"/>
<rect x="653.5" y="409.5" width="4" height="10" fill="#00b050"/>
<line x1="661.5" y1="407" x2="661.5" y2="434"/>
<rect x="659.5" y="409.5" width="4" height="20" fill="#f5472a"/>
<line x1="667.5" y1="414" x2="667.5" y2="432"/>
<rect x="665.5" y="419.5" width="4" height="11" fill="#00b050"/>
<line x1="673.5" y1="413" x2="673.5" y2="426"/>
<line x1="671" y1="421.5" x2="676" y2="421.5" stroke-width="1.3"/>
<line x1="679.5" y1="407" x2="679.5" y2="420"/>
<rect x="677.5" y="413.5" width="4" height="4" fill="#00b050"/>
<line x1="686.5" y1="397" x2="686.5" y2="426"/>
<rect x="684.5" y="414.5" width="4" height="5" fill="#f5472a"/>
<line x1="692.5" y1="393" x2="692.5" y2="419"/>
<rect x="690.5" y="404.5" width="4" height="7" fill="#f5472a"/>
<line x1="698.5" y1="401" x2="698.5" y2="413"/>
<rect x="696.5" y="404.5" width="4" height="5" fill="#00b050"/>
<line x1="704.5" y1="386" x2="704.5" y2="407"/>
<rect x="702.5" y="389.5" width="4" height="14" fill="#00b050"/>
<line x1="710.5" y1="388" x2="710.5" y2="405"/>
<rect x="708.5" y="391.5" width="4" height="9" fill="#f5472a"/>
<line x1="716.5" y1="385" x2="716.5" y2="402"/>
<rect x="714.5" y="390.5" width="4" height="8" fill="#f5472a"/>
<line x1="723.5" y1="396" x2="723.5" y2="433"/>
<rect x="721.5" y="400.5" width="4" height="29" fill="#f5472a"/>
<line x1="729.5" y1="416" x2="729.5" y2="436"/>
<rect x="727.5" y="425.5" width="4" height="6" fill="#00b050"/>
<line x1="735.5" y1="420" x2="735.5" y2="437"/>
<rect x="733.5" y="427.5" width="4" height="5" fill="#f5472a"/>
<line x1="741.5" y1="427" x2="741.5" y2="438"/>
<rect x="739.5" y="430.5" width="4" height="5" fill="#00b050"/>
<line x1="747.5" y1="425" x2="747.5" y2="434"/>
<rect x="745.5" y="428.5" width="4" height="2" fill="#f5472a"/>
<line x1="753.5" y1="425" x2="753.5" y2="446"/>
<line x1="751" y1="431.5" x2="756" y2="431.5" stroke-width="1.3"/>
<line x1="760.5" y1="426" x2="760.5" y2="441"/>
<rect x="758.5" y="428.5" width="4" height="2" fill="#f5472a"/>
<line x1="766.5" y1="411" x2="766.5" y2="429"/>
<rect x="764.5" y="420.5" width="4" height="9" fill="#00b050"/>
<line x1="772.5" y1="407" x2="772.5" y2="421"/>
<rect x="770.5" y="410.5" width="4" height="10" fill="#00b050"/>
<line x1="778.5" y1="401" x2="778.5" y2="416"/>
<rect x="776.5" y="402.5" width="4" height="9" fill="#00b050"/>
<line x1="784.5" y1="403" x2="784.5" y2="433"/>
<rect x="782.5" y="404.5" width="4" height="28" fill="#f5472a"/>
<line x1="790.5" y1="424" x2="790.5" y2="433"/>
<line x1="788" y1="429.5" x2="793" y2="429.5" stroke-width="1.3"/>
<line x1="797.5" y1="430" x2="797.5" y2="445"/>
<rect x="795.5" y="433.5" width="4" height="2" fill="#f5472a"/>
<line x1="803.5" y1="437" x2="803.5" y2="459"/>
<rect x="801.5" y="437.5" width="4" height="20" fill="#f5472a"/>
<line x1="809.5" y1="450" x2="809.5" y2="459"/>
<rect x="807.5" y="454.5" width="4" height="4" fill="#f5472a"/>
<line x1="815.5" y1="454" x2="815.5" y2="464"/>
<line x1="813" y1="459.5" x2="818" y2="459.5" stroke-width="1.3"/>
<line x1="821.5" y1="450" x2="821.5" y2="459"/>
<line x1="819" y1="456.5" x2="824" y2="456.5" stroke-width="1.3"/>
<line x1="827.5" y1="455" x2="827.5" y2="471"/>
<rect x="825.5" y="458.5" width="4" height="5" fill="#f5472a"/>
<line x1="834.5" y1="452" x2="834.5" y2="467"/>
<rect x="832.5" y="454.5" width="4" height="7" fill="#00b050"/>
<line x1="840.5" y1="446" x2="840.5" y2="459"/>
<rect x="838.5" y="454.5" width="4" height="2" fill="#00b050"/>
<line x1="846.5" y1="437" x2="846.5" y2="458"/>
<rect x="844.5" y="440.5" width="4" height="13" fill="#00b050"/>
<line x1="852.5" y1="439" x2="852.5" y2="453"/>
<rect x="850.5" y="440.5" width="4" height="11" fill="#f5472a"/>
<line x1="858.5" y1="441" x2="858.5" y2="450"/>
<rect x="856.5" y="445.5" width="4" height="4" fill="#00b050"/>
<line x1="864.5" y1="439" x2="864.5" y2="461"/>
<rect x="862.5" y="445.5" width="4" height="2" fill="#f5472a"/>
<line x1="871.5" y1="454" x2="871.5" y2="472"/>
<rect x="869.5" y="455.5" width="4" height="10" fill="#f5472a"/>
<line x1="877.5" y1="447" x2="877.5" y2="469"/>
<rect x="875.5" y="452.5" width="4" height="14" fill="#00b050"/>
<line x1="883.5" y1="442" x2="883.5" y2="456"/>
<rect x="881.5" y="447.5" width="4" height="3" fill="#00b050"/>
<line x1="889.5" y1="442" x2="889.5" y2="454"/>
<rect x="887.5" y="445.5" width="4" height="5" fill="#00b050"/>
<line x1="895.5" y1="434" x2="895.5" y2="453"/>
<rect x="893.5" y="445.5" width="4" height="6" fill="#f5472a"/>
<line x1="901.5" y1="439" x2="901.5" y2="453"/>
<rect x="899.5" y="445.5" width="4" height="5" fill="#00b050"/>
<line x1="908.5" y1="438" x2="908.5" y2="446"/>
<rect x="906.5" y="442.5" width="4" height="3" fill="#00b050"/>
<line x1="914.5" y1="420" x2="914.5" y2="450"/>
<rect x="912.5" y="420.5" width="4" height="21" fill="#00b050"/>
<line x1="920.5" y1="417" x2="920.5" y2="432"/>
<rect x="918.5" y="423.5" width="4" height="6" fill="#f5472a"/>
<line x1="926.5" y1="420" x2="926.5" y2="433"/>
<line x1="924" y1="426.5" x2="929" y2="426.5" stroke-width="1.3"/>
<line x1="932.5" y1="424" x2="932.5" y2="447"/>
<rect x="930.5" y="426.5" width="4" height="18" fill="#f5472a"/>
<line x1="938.5" y1="440" x2="938.5" y2="460"/>
<rect x="936.5" y="443.5" width="4" height="16" fill="#f5472a"/>
<line x1="945.5" y1="455" x2="945.5" y2="463"/>
<line x1="943" y1="456.5" x2="948" y2="456.5" stroke-width="1.3"/>
<line x1="951.5" y1="457" x2="951.5" y2="469"/>
<rect x="949.5" y="457.5" width="4" height="6" fill="#f5472a"/>
<line x1="957.5" y1="458" x2="957.5" y2="465"/>
<line x1="955" y1="462.5" x2="960" y2="462.5" stroke-width="1.3"/>
<line x1="963.5" y1="442" x2="963.5" y2="465"/>
<rect x="961.5" y="445.5" width="4" height="18" fill="#00b050"/>
<line x1="969.5" y1="446" x2="969.5" y2="453"/>
<line x1="967" y1="448.5" x2="972" y2="448.5" stroke-width="1.3"/>
<line x1="975.5" y1="443" x2="975.5" y2="461"/>
<rect x="973.5" y="448.5" width="4" height="9" fill="#f5472a"/>
<line x1="982.5" y1="438" x2="982.5" y2="447"/>
<rect x="980.5" y="444.5" width="4" height="3" fill="#00b050"/>
<line x1="988.5" y1="432" x2="988.5" y2="454"/>
<rect x="986.5" y="434.5" width="4" height="10" fill="#00b050"/>
<line x1="994.5" y1="405" x2="994.5" y2="433"/>
<rect x="992.5" y="406.5" width="4" height="26" fill="#00b050"/>
<line x1="1000.5" y1="373" x2="1000.5" y2="407"/>
<rect x="998.5" y="381.5" width="4" height="23" fill="#00b050"/>
<line x1="1006.5" y1="372" x2="1006.5" y2="385"/>
<rect x="1004.5" y="378.5" width="4" height="2" fill="#f5472a"/>
<line x1="1012.5" y1="348" x2="1012.5" y2="379"/>
<rect x="1010.5" y="372.5" width="4" height="5" fill="#00b050"/>
<line x1="1019.5" y1="356" x2="1019.5" y2="376"/>
<rect x="1017.5" y="359.5" width="4" height="9" fill="#00b050"/>
<line x1="1025.5" y1="344" x2="1025.5" y2="371"/>
<rect x="1023.5" y="354.5" width="4" height="8" fill="#00b050"/>
<line x1="1031.5" y1="360" x2="1031.5" y2="379"/>
<rect x="1029.5" y="361.5" width="4" height="17" fill="#f5472a"/>
<line x1="1037.5" y1="372" x2="1037.5" y2="387"/>
<line x1="1035" y1="375.5" x2="1040" y2="375.5" stroke-width="1.3"/>
<line x1="1043.5" y1="359" x2="1043.5" y2="377"/>
<rect x="1041.5" y="368.5" width="4" height="8" fill="#00b050"/>
<line x1="1049.5" y1="352" x2="1049.5" y2="369"/>
<rect x="1047.5" y="357.5" width="4" height="9" fill="#00b050"/>
<line x1="1056.5" y1="329" x2="1056.5" y2="361"/>
<rect x="1054.5" y="353.5" width="4" height="3" fill="#f5472a"/>
<line x1="1062.5" y1="352" x2="1062.5" y2="368"/>
<rect x="1060.5" y="355.5" width="4" height="3" fill="#f5472a"/>
<line x1="1068.5" y1="335" x2="1068.5" y2="360"/>
<rect x="1066.5" y="348.5" width="4" height="8" fill="#00b050"/>
<line x1="1074.5" y1="323" x2="1074.5" y2="356"/>
<line x1="1072" y1="349.5" x2="1077" y2="349.5" stroke-width="1.3"/>
<line x1="1080.5" y1="276" x2="1080.5" y2="331"/>
<rect x="1078.5" y="277.5" width="4" height="49" fill="#00b050"/>
<line x1="1086.5" y1="249" x2="1086.5" y2="293"/>
<rect x="1084.5" y="272.5" width="4" height="14" fill="#00b050"/>
<line x1="1093.5" y1="241" x2="1093.5" y2="266"/>
<rect x="1091.5" y="244.5" width="4" height="22" fill="#00b050"/>
</g>
<rect x="1091" y="236.3" width="5" height="1.6" rx="0.8" fill="#1aa85a"/>
<rect x="153" y="581.8" width="5" height="1.6" rx="0.8" fill="#1aa85a"/>
<text x="1120.3" y="503.0" font-size="12.3" fill="#666" textLength="37.5" lengthAdjust="spacing">1,250.0</text>
<text x="1120.3" y="578.3" font-size="12.3" fill="#666" textLength="37.5" lengthAdjust="spacing">1,200.0</text>
<text x="1120.3" y="653.7" font-size="12.3" fill="#666" textLength="37.5" lengthAdjust="spacing">1,150.0</text>
<polygon points="1114.5,392.5 1119.5,384.0 1161,384.0 1161,401.0 1119.5,401.0" fill="#ee4430"/>
<text x="1120.2" y="397.0" font-size="12.3" fill="#fff" stroke="#fff" stroke-width="0.3" textLength="38" lengthAdjust="spacing">1,320.5</text>
<polygon points="1114.5,439.5 1119.5,431.0 1161,431.0 1161,448.0 1119.5,448.0" fill="#1f44f5"/>
<text x="1120.2" y="444.0" font-size="12.3" fill="#fff" stroke="#fff" stroke-width="0.3" textLength="38" lengthAdjust="spacing">1,289.5</text>
<polygon points="1114.5,244 1119.5,235.5 1161,235.5 1161,252.5 1119.5,252.5" fill="#12ae52"/>
<text x="1120.2" y="248.5" font-size="12.3" fill="#fff" stroke="#fff" stroke-width="0.3" textLength="38" lengthAdjust="spacing">1,419.1</text>
<polygon points="1114.5,272.5 1119.5,264.0 1161,264.0 1161,281.0 1119.5,281.0" fill="#000"/>
<text x="1120.2" y="277.0" font-size="12.3" fill="#fff" stroke="#fff" stroke-width="0.3" textLength="38" lengthAdjust="spacing">1,400.0</text>
<polygon points="1114.5,310.3 1119.5,301.8 1161,301.8 1161,318.8 1119.5,318.8" fill="#000"/>
<text x="1120.2" y="314.8" font-size="12.3" fill="#fff" stroke="#fff" stroke-width="0.3" textLength="38" lengthAdjust="spacing">1,375.0</text>
<polygon points="1114.5,348 1119.5,339.5 1161,339.5 1161,356.5 1119.5,356.5" fill="#000"/>
<text x="1120.2" y="352.5" font-size="12.3" fill="#fff" stroke="#fff" stroke-width="0.3" textLength="38" lengthAdjust="spacing">1,350.0</text>
<polygon points="1114.5,385.8 1119.5,377.3 1161,377.3 1161,394.3 1119.5,394.3" fill="#000"/>
<text x="1120.2" y="390.3" font-size="12.3" fill="#fff" stroke="#fff" stroke-width="0.3" textLength="38" lengthAdjust="spacing">1,325.0</text>
<polygon points="1114.5,423.6 1119.5,415.1 1161,415.1 1161,432.1 1119.5,432.1" fill="#000"/>
<text x="1120.2" y="428.1" font-size="12.3" fill="#fff" stroke="#fff" stroke-width="0.3" textLength="38" lengthAdjust="spacing">1,300.0</text>
<polygon points="1114.5,468.5 1119.5,460.0 1161,460.0 1161,477.0 1119.5,477.0" fill="#000"/>
<text x="1120.2" y="473.0" font-size="12.3" fill="#fff" stroke="#fff" stroke-width="0.3" textLength="38" lengthAdjust="spacing">1,270.0</text>
<text x="1131.7" y="699.3" font-size="12.3" fill="#666" textLength="27.5" lengthAdjust="spacing">500K</text>
<text x="1131.7" y="741.3" font-size="12.3" fill="#666" textLength="27.5" lengthAdjust="spacing">250K</text>
<polygon points="1126,683.2 1131,674.7 1161,674.7 1161,691.7 1131,691.7" fill="#b23fd0"/>
<text x="1131.8" y="687.7" font-size="12.3" fill="#fff" stroke="#fff" stroke-width="0.3" textLength="27" lengthAdjust="spacing">572K</text>
<polygon points="1126,777.5 1131,769.0 1161,769.0 1161,786.0 1131,786.0" fill="#12ae52"/>
<text x="1144.5" y="782.0" font-size="12.3" fill="#fff" stroke="#fff" stroke-width="0.3" textLength="14.5" lengthAdjust="spacing">0K</text>
<text x="119" y="796" font-size="11.2" fill="#666" text-anchor="middle">Nov 5</text>
<text x="237" y="796" font-size="11.2" fill="#666" text-anchor="middle">Dec 3</text>
<text x="354" y="796" font-size="11.2" fill="#666" text-anchor="middle">Dec 31</text>
<text x="465" y="796" font-size="11.2" fill="#666" text-anchor="middle">Jan 28</text>
<text x="582" y="796" font-size="11.2" fill="#666" text-anchor="middle">Feb 25</text>
<text x="705" y="796" font-size="11.2" fill="#666" text-anchor="middle">Mar 25</text>
<text x="822" y="796" font-size="11.2" fill="#666" text-anchor="middle">Apr 22</text>
<text x="946" y="796" font-size="11.2" fill="#666" text-anchor="middle">May 20</text>
<text x="1063" y="796" font-size="11.2" fill="#666" text-anchor="middle">Jun 17</text>
</svg>
<div class="box" style="left:803px;top:800px;width:8px;height:1px;background:#d0d0d0"></div>
<div class="box" style="left:1090px;top:800px;width:8px;height:1px;background:#d0d0d0"></div>
</body>
</html>
